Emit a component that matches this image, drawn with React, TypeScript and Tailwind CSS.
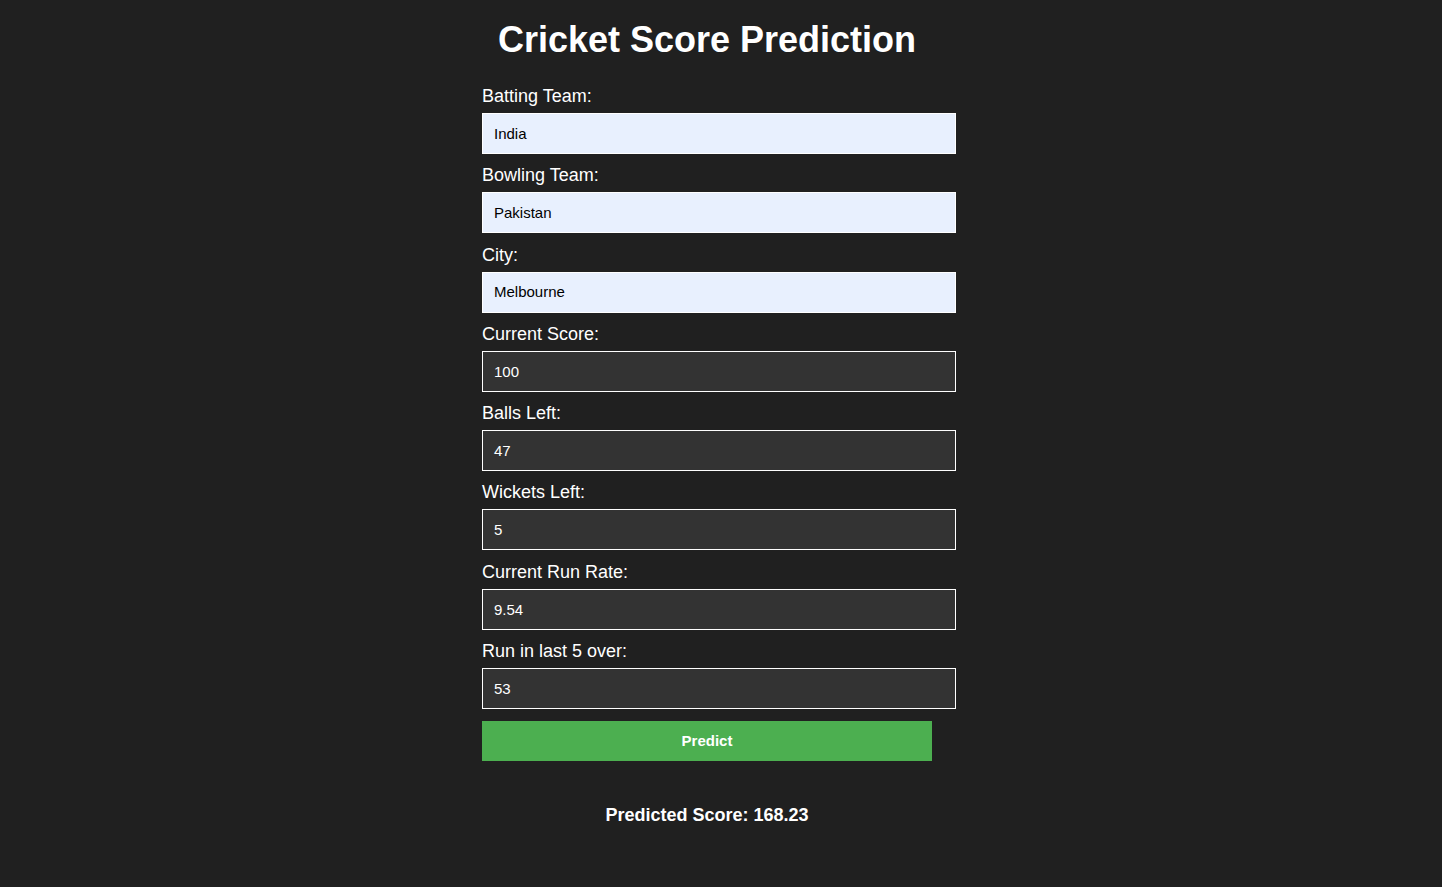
const fields = [
  { label: "Batting Team:", value: "India", filled: true },
  { label: "Bowling Team:", value: "Pakistan", filled: true },
  { label: "City:", value: "Melbourne", filled: true },
  { label: "Current Score:", value: "100", filled: false },
  { label: "Balls Left:", value: "47", filled: false },
  { label: "Wickets Left:", value: "5", filled: false },
  { label: "Current Run Rate:", value: "9.54", filled: false },
  { label: "Run in last 5 over:", value: "53", filled: false },
];

export default function App() {
  return (
    <div className="min-h-screen bg-[#202020] pt-[19px] pr-[28px] font-['Liberation_Sans',Arial,sans-serif] text-white">
      <div className="mx-auto w-[450px]">
        <h1 className="text-center text-[36px] font-bold leading-[41px] mb-[26px]">
          Cricket Score Prediction
        </h1>

        <form className="flex flex-col">
          {fields.map((f) => (
            <div key={f.label} className="mb-[11.3px]">
              <label className="block text-[18px] leading-[20px] mb-[7px]">{f.label}</label>
              <div
                className={
                  "w-[474px] h-[41px] border border-white pl-[11px] pt-[1px] flex items-center text-[15px] " +
                  (f.filled ? "bg-[#e8f0fe] text-black" : "bg-[#333333] text-white")
                }
              >
                {f.value}
              </div>
            </div>
          ))}

          <button
            type="button"
            className="mt-[0.7px] w-[450px] h-[40px] bg-[#4caf50] text-white text-[15px] font-bold"
          >
            Predict
          </button>
        </form>

        <p className="mt-[44px] text-center text-[18px] font-bold leading-[20px]">
          Predicted Score: 168.23
        </p>
      </div>
    </div>
  );
}
